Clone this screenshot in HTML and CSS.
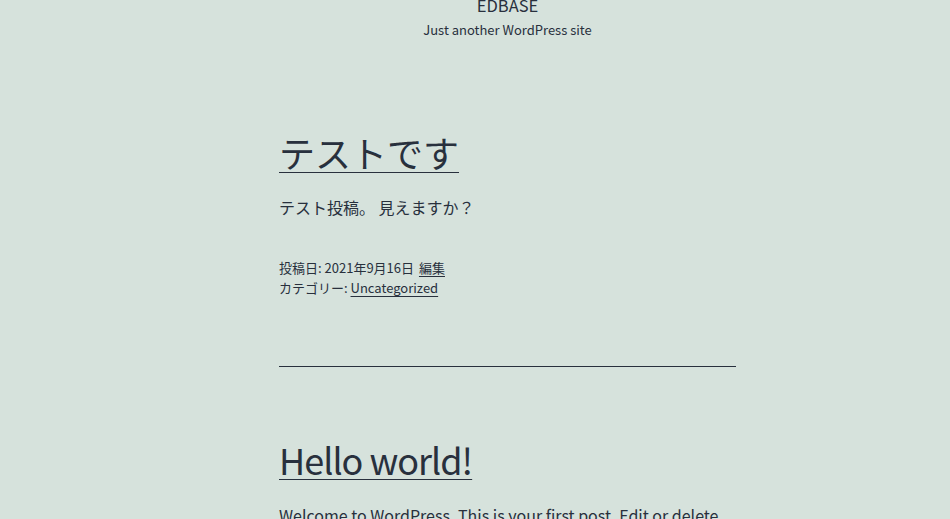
FILE: index.html
```html
<!DOCTYPE html>
<html lang="ja"><head><meta charset="utf-8"><title>EDBASE</title><link rel="stylesheet" href="styles.css"></head>
<body>
<div class="page">
  <header class="site-header">
    <p class="site-title"><a href="#">EDBASE</a></p>
    <p class="site-description">Just another WordPress site</p>
  </header>
  <main class="site-main">
    <article class="post">
      <h2 class="entry-title"><a href="#">テストです</a></h2>
      <div class="entry-content"><p>テスト投稿。 見えますか？</p></div>
      <footer class="entry-footer">
        <div class="meta-line">投稿日: 2021年9月16日 <a href="#" class="edit-link">編集</a></div>
        <div class="meta-line">カテゴリー: <a href="#">Uncategorized</a></div>
      </footer>
    </article>
    <hr class="post-separator">
    <article class="post">
      <h2 class="entry-title latin"><a href="#">Hello world!</a></h2>
      <div class="entry-content"><p>Welcome to WordPress. This is your first post. Edit or delete it, then start writing!</p></div>
    </article>
  </main>
</div>
</body></html>
```
FILE: styles.css
```css
html, body {
  margin: 0;
  padding: 0;
}
body {
  background: #d6e2dc;
  color: #28303d;
  font-family: "Noto Sans CJK JP", "Noto Sans", sans-serif;
  overflow: hidden;
}
a {
  color: #28303d;
  text-decoration: underline;
  text-decoration-thickness: 1px;
  text-underline-offset: 3px;
}
.page {
  width: 457px;
  margin-left: 279px;
}
.site-header {
  text-align: center;
  margin-top: -7px;
}
.site-header p {
  margin: 0;
}
.site-title {
  font-size: 16.5px;
  line-height: 24px;
  text-transform: uppercase;
}
.site-title a {
  text-decoration: none;
}
.site-description {
  margin-top: 3px !important;
  font-size: 13px;
  line-height: 20px;
}
.site-main {
  padding-top: 90px;
}
.entry-title {
  margin: 0;
  font-size: 36px;
  line-height: 44px;
  font-weight: 400;
}
.entry-title a {
  text-underline-offset: 4px;
}
.entry-title.latin {
  letter-spacing: -1px;
}
.entry-content p {
  margin: 21px 0 0;
  font-size: 16px;
  line-height: 24px;
}
.entry-footer {
  margin-top: 39px;
  font-size: 13px;
  line-height: 20px;
}
.edit-link {
  margin-left: 2px;
}
.post-separator {
  margin: 68px 0 0;
  border: 0;
  border-top: 1px solid #28303d;
  height: 0;
}
.post-separator + .post {
  margin-top: 70px;
}
.post-separator + .post .entry-content p {
  margin-top: 22px;
}
```
